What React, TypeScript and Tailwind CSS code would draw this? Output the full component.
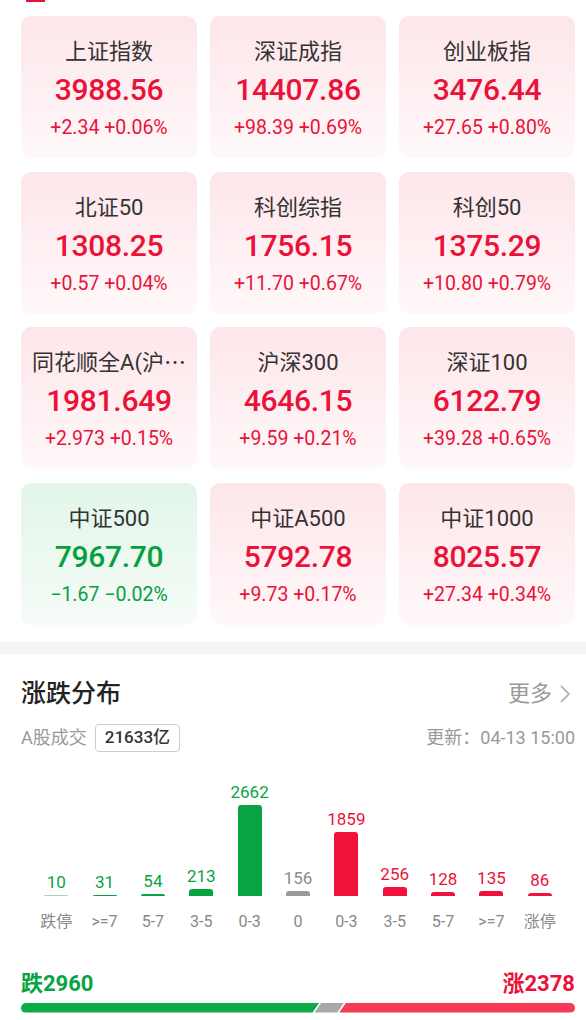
import React from "react";

type Card = { name: string; price: string; change: string; up: boolean };

const cards: Card[] = [
  { name: "上证指数", price: "3988.56", change: "+2.34 +0.06%", up: true },
  { name: "深证成指", price: "14407.86", change: "+98.39 +0.69%", up: true },
  { name: "创业板指", price: "3476.44", change: "+27.65 +0.80%", up: true },
  { name: "北证50", price: "1308.25", change: "+0.57 +0.04%", up: true },
  { name: "科创综指", price: "1756.15", change: "+11.70 +0.67%", up: true },
  { name: "科创50", price: "1375.29", change: "+10.80 +0.79%", up: true },
  { name: "同花顺全A(沪⋯", price: "1981.649", change: "+2.973 +0.15%", up: true },
  { name: "沪深300", price: "4646.15", change: "+9.59 +0.21%", up: true },
  { name: "深证100", price: "6122.79", change: "+39.28 +0.65%", up: true },
  { name: "中证500", price: "7967.70", change: "−1.67 −0.02%", up: false },
  { name: "中证A500", price: "5792.78", change: "+9.73 +0.17%", up: true },
  { name: "中证1000", price: "8025.57", change: "+27.34 +0.34%", up: true },
];

type Col = { label: string; value: number; kind: "down" | "flat" | "up" };
const cols: Col[] = [
  { label: "跌停", value: 10, kind: "down" },
  { label: ">=7", value: 31, kind: "down" },
  { label: "5-7", value: 54, kind: "down" },
  { label: "3-5", value: 213, kind: "down" },
  { label: "0-3", value: 2662, kind: "down" },
  { label: "0", value: 156, kind: "flat" },
  { label: "0-3", value: 1859, kind: "up" },
  { label: "3-5", value: 256, kind: "up" },
  { label: "5-7", value: 128, kind: "up" },
  { label: ">=7", value: 135, kind: "up" },
  { label: "涨停", value: 86, kind: "up" },
];

const font = { fontFamily: 'Roboto, "Noto Sans CJK SC", sans-serif' };

function IndexCard({ c }: { c: Card }) {
  return (
    <div
      className={
        "h-[142px] rounded-[10px] flex flex-col items-center pt-[22px] " +
        (c.up
          ? "bg-gradient-to-b from-[#fde6ea] to-[#fff8f9]"
          : "bg-gradient-to-b from-[#e2f5e8] to-[#f6fcf8]")
      }
    >
      <div className="text-[22px] leading-[28px] text-[#333333] whitespace-nowrap">{c.name}</div>
      <div
        className={
          "mt-[5px] text-[30px] leading-[38px] font-medium tracking-[-0.3px] " +
          (c.up ? "text-[#ea1238]" : "text-[#06a03f]")
        }
      >
        {c.price}
      </div>
      <div
        className={
          "mt-[7px] text-[19.5px] leading-[24px] whitespace-nowrap " +
          (c.up ? "text-[#ea1238]" : "text-[#06a03f]")
        }
      >
        {c.change}
      </div>
    </div>
  );
}

export default function App() {
  const total = 2960 + 156 + 2378;
  return (
    <div className="w-[586px] h-[1020px] overflow-hidden bg-white" style={font}>
      <div className="h-[2px] w-[19px] ml-[26px] bg-[#ea1238]" />
      <div className="pl-[21px] pr-[11px] pt-[14px] pb-[17px] grid grid-cols-3 gap-x-[13px] gap-y-[13.5px]">
        {cards.map((c, i) => (
          <IndexCard key={i} c={c} />
        ))}
      </div>
      <div className="h-[12px] bg-[#f5f5f5]" />
      <div className="pl-[21px] pr-[11px] pt-[24px]">
        <div className="flex items-center justify-between">
          <div className="text-[25px] leading-[32px] font-medium text-[#222222]">涨跌分布</div>
          <div className="flex items-center text-[22px] leading-[30px] text-[#999999] mr-[2px]">
            <span>更多</span>
            <svg width="16" height="22" viewBox="0 0 16 22" className="ml-[5px]">
              <path d="M4 3 L12 11 L4 19" fill="none" stroke="#b8b8b8" strokeWidth="1.8" />
            </svg>
          </div>
        </div>
        <div className="mt-[14px] flex items-center justify-between">
          <div className="flex items-center">
            <span className="text-[18px] leading-[24px] text-[#999999]">A股成交</span>
            <span className="ml-[8px] h-[28px] px-[9px] flex items-center border border-[#cccccc] rounded-[4px] text-[17px] font-medium text-[#333333]">
              21633亿
            </span>
          </div>
          <div className="text-[18px] leading-[24px] text-[#999999]">更新：04-13 15:00</div>
        </div>
        <div className="mx-[11px]">
          <div className="h-[144px] flex items-end">
            {cols.map((c, i) => {
              const h = Math.max(1, Math.round(c.value * 0.0342));
              const color =
                c.kind === "down" ? "text-[#08a443]" : c.kind === "up" ? "text-[#ea1238]" : "text-[#8c8c8c]";
              const bg =
                c.kind === "down" ? "bg-[#08a443]" : c.kind === "up" ? "bg-[#f0123a]" : "bg-[#9a9a9a]";
              return (
                <div key={i} className="flex-1 flex flex-col items-center">
                  <div className={"text-[17px] leading-[20px] mb-[3px] " + color}>{c.value}</div>
                  <div
                    className={"w-[24px] rounded-t-[3px] " + bg + (c.value < 20 ? " opacity-40" : "")}
                    style={{ height: h }}
                  />
                </div>
              );
            })}
          </div>
          <div className="mt-[15px] flex">
            {cols.map((c, i) => (
              <div key={i} className="flex-1 text-center text-[16px] leading-[22px] text-[#888888]">
                {c.label}
              </div>
            ))}
          </div>
        </div>
        <div className="mt-[37px] flex items-center justify-between">
          <div className="text-[22px] leading-[28px] font-bold text-[#08a443]">跌2960</div>
          <div className="text-[22px] leading-[28px] font-bold text-[#ea1238]">涨2378</div>
        </div>
        <div className="mt-[5px] h-[10px] flex">
          <div
            className="h-full rounded-l-full bg-[#0bac46] [clip-path:polygon(0_0,100%_0,calc(100%-7px)_100%,0_100%)]"
            style={{ width: `${(2960 / total) * 100}%` }}
          />
          <div
            className="h-full ml-[-5px] bg-[#a8a8a8] [clip-path:polygon(7px_0,100%_0,calc(100%-7px)_100%,0_100%)]"
            style={{ width: `calc(${(156 / total) * 100}% + 14px)` }}
          />
          <div className="h-full ml-[-5px] flex-1 rounded-r-full bg-[#f73a56] [clip-path:polygon(7px_0,100%_0,100%_100%,0_100%)]" />
        </div>
      </div>
    </div>
  );
}
